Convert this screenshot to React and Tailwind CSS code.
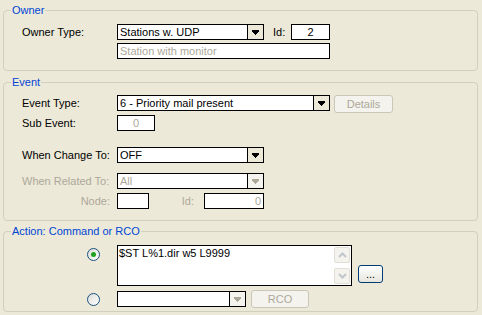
import React from 'react';

const Arrow = ({ disabled }) => (
  <span
    className={`flex w-[16px] shrink-0 items-center justify-center border-l border-black ${
      disabled ? 'bg-[#f4f3ee]' : 'bg-[#ece9d8]'
    }`}
  >
    <svg width="7" height="5" viewBox="0 0 7 5">
      <path
        d="M0 0h7v2H0zM1 2h5v1H1zM2 3h3v1H2zM3 4h1v1H3z"
        fill={disabled ? '#aca899' : '#000'}
      />
    </svg>
  </span>
);

const Combo = ({ value, width, disabled }) => (
  <div className={`flex h-[16px] shrink-0 border border-black bg-white ${width}`}>
    <span
      className={`flex-1 overflow-hidden whitespace-nowrap pl-[2px] leading-[14px] ${
        disabled ? 'text-[#aca899]' : 'text-black'
      }`}
    >
      {value}
    </span>
    <Arrow disabled={disabled} />
  </div>
);

const Box = ({ value, width, align = 'text-left', gray }) => (
  <div
    className={`h-[16px] shrink-0 border border-black bg-white px-[2px] leading-[14px] ${width} ${align} ${
      gray ? 'text-[#aca899]' : 'text-black'
    }`}
  >
    {value}
  </div>
);

const Button = ({ children, width, disabled }) => (
  <div
    className={`flex h-[18px] shrink-0 items-center justify-center rounded-[3px] border leading-none ${width} ${
      disabled
        ? 'border-[#c9c7ba] bg-[#f4f3ee] text-[#aca899]'
        : 'border-[#003c74] bg-gradient-to-b from-white to-[#e6e5dd] text-black'
    }`}
  >
    {children}
  </div>
);

const Radio = ({ checked }) => (
  <span className="flex h-[13px] w-[13px] shrink-0 items-center justify-center rounded-full border border-[#1c5180] bg-gradient-to-br from-[#dcdcd7] to-white">
    {checked && <span className="h-[5px] w-[5px] rounded-full bg-[#21a121]" />}
  </span>
);

const Group = ({ title, className, children }) => (
  <fieldset
    className={`ml-[3px] w-[475px] rounded-[4px] border border-[#d0d0bf] ${className}`}
  >
    <legend className="ml-[7px] px-[1px] leading-[13px] text-[#0046d5]">{title}</legend>
    {children}
  </fieldset>
);

const Label = ({ children, right, gray }) => (
  <span
    className={`w-[95px] shrink-0 leading-[16px] ${right ? 'pr-[7px] text-right' : ''} ${
      gray ? 'text-[#aca899]' : 'text-black'
    }`}
  >
    {children}
  </span>
);

const ScrollBtn = ({ up }) => (
  <div className="flex h-[16px] w-[16px] items-center justify-center rounded-[2px] border border-[#e2e0d6] bg-[#f4f3ee]">
    <svg width="9" height="6" viewBox="0 0 9 6">
      <path
        d={up ? 'M1 5 L4.5 1.5 L8 5' : 'M1 1 L4.5 4.5 L8 1'}
        fill="none"
        stroke="#c2c6cc"
        strokeWidth="2"
      />
    </svg>
  </div>
);

export default function App() {
  return (
    <div
      className="h-[315px] w-[482px] bg-[#ece9d8] pt-[4px] text-[11px] text-black"
      style={{ fontFamily: '"Liberation Sans", Arial, sans-serif' }}
    >
      <Group title="Owner">
        <div className="flex flex-col gap-[3px] pb-[11px] pl-[18px] pt-[7px]">
          <div className="flex items-center">
            <Label>Owner Type:</Label>
            <Combo value="Stations w. UDP" width="w-[147px]" />
            <span className="ml-[9px] w-[18px] leading-[16px]">Id:</span>
            <Box value="2" width="w-[39px]" align="text-center" />
          </div>
          <div className="flex items-center">
            <Label />
            <Box value="Station with monitor" width="w-[213px]" gray />
          </div>
        </div>
      </Group>

      <Group title="Event" className="mt-[5px]">
        <div className="flex flex-col pb-[11px] pl-[18px] pt-[6px]">
          <div className="flex items-start">
            <Label>Event Type:</Label>
            <Combo value="6 - Priority mail present" width="w-[213px]" />
            <div className="ml-[4px]">
              <Button width="w-[59px]" disabled>
                Details
              </Button>
            </div>
          </div>
          <div className="mt-[2px] flex items-center">
            <Label>Sub Event:</Label>
            <Box value="0" width="w-[38px]" align="text-center" gray />
          </div>
          <div className="mt-[16px] flex items-center">
            <Label>When Change To:</Label>
            <Combo value="OFF" width="w-[147px]" />
          </div>
          <div className="mt-[10px] flex items-center">
            <Label gray>When Related To:</Label>
            <Combo value="All" width="w-[147px]" disabled />
          </div>
          <div className="mt-[4px] flex items-center">
            <Label right gray>
              Node:
            </Label>
            <Box width="w-[32px]" />
            <span className="w-[55px] pr-[10px] text-right leading-[16px] text-[#aca899]">Id:</span>
            <Box value="0" width="w-[60px]" align="text-right" gray />
          </div>
        </div>
      </Group>

      <Group title="Action: Command or RCO" className="mt-[4px]">
        <div className="flex flex-col pb-[3px] pl-[18px] pt-[7px]">
          <div className="flex items-start">
            <span className="w-[95px] shrink-0 pl-[65px] pt-[3px]">
              <Radio checked />
            </span>
            <div className="flex h-[41px] w-[235px] shrink-0 border border-black bg-white">
              <span className="flex-1 pl-[1px] pt-[1px] leading-[13px]">$ST L%1.dir w5 L9999</span>
              <div className="flex flex-col justify-between pr-[1px] pt-[1px] pb-[1px]">
                <ScrollBtn up />
                <ScrollBtn />
              </div>
            </div>
            <div className="ml-[6px] mt-[20px]">
              <Button width="w-[25px]">...</Button>
            </div>
          </div>
          <div className="mt-[4px] flex items-center">
            <span className="w-[95px] shrink-0 pl-[65px]">
              <Radio />
            </span>
            <Combo value="" width="w-[129px]" disabled />
            <div className="ml-[5px]">
              <Button width="w-[58px]" disabled>
                RCO
              </Button>
            </div>
          </div>
        </div>
      </Group>
    </div>
  );
}
